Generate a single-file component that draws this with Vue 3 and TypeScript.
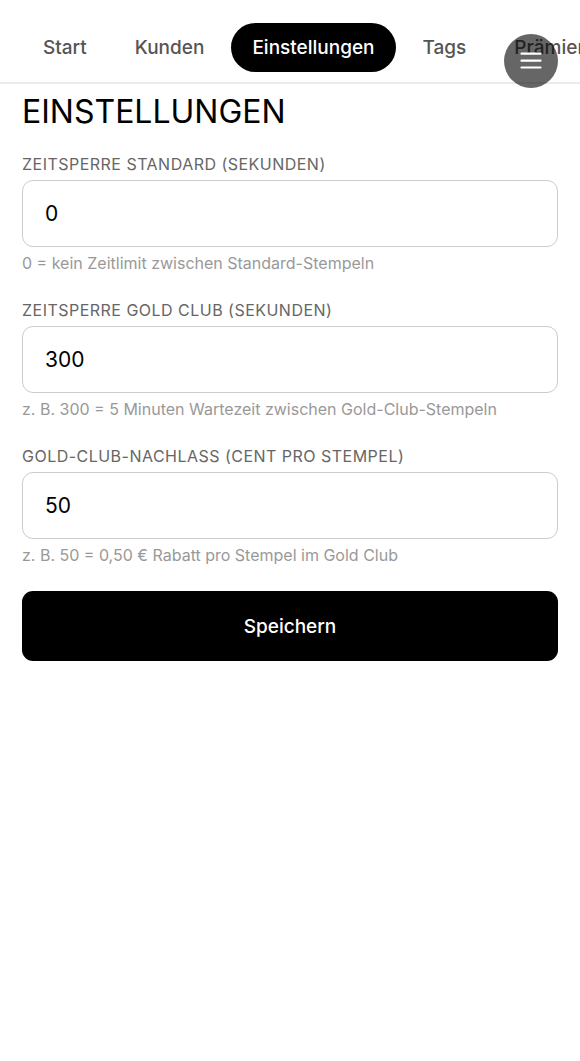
<script setup lang="ts">
interface Tab {
  label: string
  href: string
}

interface Field {
  id: string
  label: string
  value: string
  hint: string
}

const tabs: Tab[] = [
  { label: 'Start', href: '#start' },
  { label: 'Kunden', href: '#kunden' },
  { label: 'Einstellungen', href: '#einstellungen' },
  { label: 'Tags', href: '#tags' },
  { label: 'Prämien', href: '#praemien' },
]
const active = 'Einstellungen'

const fields: Field[] = [
  {
    id: 'lock-standard',
    label: 'Zeitsperre Standard (Sekunden)',
    value: '0',
    hint: '0 = kein Zeitlimit zwischen Standard-Stempeln',
  },
  {
    id: 'lock-gold',
    label: 'Zeitsperre Gold Club (Sekunden)',
    value: '300',
    hint: 'z. B. 300 = 5 Minuten Wartezeit zwischen Gold-Club-Stempeln',
  },
  {
    id: 'discount-gold',
    label: 'Gold-Club-Nachlass (Cent pro Stempel)',
    value: '50',
    hint: 'z. B. 50 = 0,50 € Rabatt pro Stempel im Gold Club',
  },
]
</script>

<template>
  <div class="page">
    <nav class="tabs">
      <a
        v-for="tab in tabs"
        :key="tab.href"
        class="tab"
        :class="{ active: tab.label === active }"
        :href="tab.href"
      >{{ tab.label }}</a>
    </nav>
    <button class="menu" type="button" aria-label="Menü">
      <svg viewBox="0 0 28 28" width="28" height="28" aria-hidden="true">
        <path d="M4.5 6.7h19M4.5 13.7h19M4.5 20.5h19" />
      </svg>
    </button>
    <main>
      <h1>Einstellungen</h1>
      <form @submit.prevent>
        <div v-for="field in fields" :key="field.id" class="field">
          <label :for="field.id">{{ field.label }}</label>
          <input :id="field.id" type="text" inputmode="numeric" :value="field.value" />
          <p>{{ field.hint }}</p>
        </div>
        <button class="save" type="submit">Speichern</button>
      </form>
    </main>
  </div>
</template>

<style>
body {
  background: #fff;
}
</style>

<style scoped>
.page {
  position: relative;
  font-family: Inter, "Liberation Sans", sans-serif;
  color: #000;
}
.tabs {
  display: flex;
  gap: 6px;
  padding: 23px 22px 10px;
  border-bottom: 2px solid #ebebeb;
  overflow-x: auto;
  scrollbar-width: none;
}
.tab {
  flex: none;
  padding: 0 21px;
  border-radius: 25px;
  font-size: 19px;
  font-weight: 500;
  line-height: 49px;
  color: #555;
  text-decoration: none;
}
.tab.active {
  background: #000;
  color: #fff;
}
.menu {
  position: absolute;
  top: 34px;
  right: 22px;
  display: flex;
  align-items: center;
  justify-content: center;
  width: 54px;
  height: 54px;
  padding: 0;
  border: 0;
  border-radius: 50%;
  background: rgba(0, 0, 0, 0.6);
}
.menu svg {
  fill: none;
  stroke: #fff;
  stroke-width: 2.2;
  stroke-linecap: round;
}
main {
  padding: 8px 22px 32px;
}
h1 {
  margin: 0 0 21px;
  font-size: 32px;
  font-weight: 400;
  line-height: 40px;
  text-transform: uppercase;
}
.field {
  margin-bottom: 24px;
}
label {
  display: block;
  margin-bottom: 5px;
  font-size: 16px;
  line-height: 22px;
  letter-spacing: 0.03em;
  text-transform: uppercase;
  color: #666;
}
input {
  display: block;
  box-sizing: border-box;
  width: 100%;
  height: 67px;
  padding: 0 22px;
  border: 1px solid #ccc;
  border-radius: 11px;
  background: #fff;
  font: 400 21px Inter, "Liberation Sans", sans-serif;
  color: #000;
}
.field p {
  margin: 4px 0 0;
  font-size: 16px;
  line-height: 24px;
  color: #999;
}
.save {
  display: block;
  width: 100%;
  height: 70px;
  border: 0;
  border-radius: 11px;
  background: #000;
  font: 500 19px Inter, "Liberation Sans", sans-serif;
  color: #fff;
}
</style>
